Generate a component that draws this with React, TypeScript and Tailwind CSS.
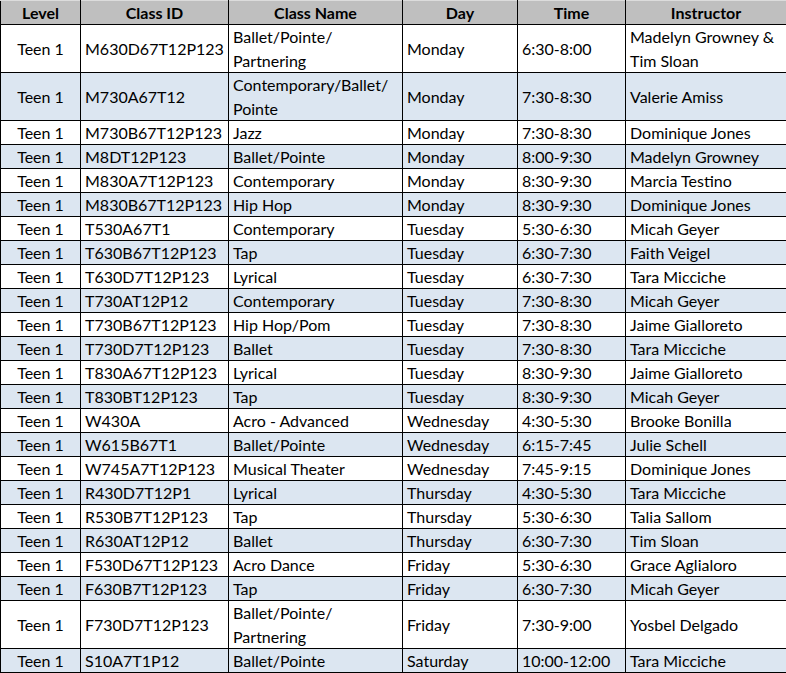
const rows: [string, string, string, string, string, string][] = [
  ['Teen 1', 'M630D67T12P123', 'Ballet/Pointe/ Partnering', 'Monday', '6:30-8:00', 'Madelyn Growney & Tim Sloan'],
  ['Teen 1', 'M730A67T12', 'Contemporary/Ballet/ Pointe', 'Monday', '7:30-8:30', 'Valerie Amiss'],
  ['Teen 1', 'M730B67T12P123', 'Jazz', 'Monday', '7:30-8:30', 'Dominique Jones'],
  ['Teen 1', 'M8DT12P123', 'Ballet/Pointe', 'Monday', '8:00-9:30', 'Madelyn Growney'],
  ['Teen 1', 'M830A7T12P123', 'Contemporary', 'Monday', '8:30-9:30', 'Marcia Testino'],
  ['Teen 1', 'M830B67T12P123', 'Hip Hop', 'Monday', '8:30-9:30', 'Dominique Jones'],
  ['Teen 1', 'T530A67T1', 'Contemporary', 'Tuesday', '5:30-6:30', 'Micah Geyer'],
  ['Teen 1', 'T630B67T12P123', 'Tap', 'Tuesday', '6:30-7:30', 'Faith Veigel'],
  ['Teen 1', 'T630D7T12P123', 'Lyrical', 'Tuesday', '6:30-7:30', 'Tara Micciche'],
  ['Teen 1', 'T730AT12P12', 'Contemporary', 'Tuesday', '7:30-8:30', 'Micah Geyer'],
  ['Teen 1', 'T730B67T12P123', 'Hip Hop/Pom', 'Tuesday', '7:30-8:30', 'Jaime Gialloreto'],
  ['Teen 1', 'T730D7T12P123', 'Ballet', 'Tuesday', '7:30-8:30', 'Tara Micciche'],
  ['Teen 1', 'T830A67T12P123', 'Lyrical', 'Tuesday', '8:30-9:30', 'Jaime Gialloreto'],
  ['Teen 1', 'T830BT12P123', 'Tap', 'Tuesday', '8:30-9:30', 'Micah Geyer'],
  ['Teen 1', 'W430A', 'Acro - Advanced', 'Wednesday', '4:30-5:30', 'Brooke Bonilla'],
  ['Teen 1', 'W615B67T1', 'Ballet/Pointe', 'Wednesday', '6:15-7:45', 'Julie Schell'],
  ['Teen 1', 'W745A7T12P123', 'Musical Theater', 'Wednesday', '7:45-9:15', 'Dominique Jones'],
  ['Teen 1', 'R430D7T12P1', 'Lyrical', 'Thursday', '4:30-5:30', 'Tara Micciche'],
  ['Teen 1', 'R530B7T12P123', 'Tap', 'Thursday', '5:30-6:30', 'Talia Sallom'],
  ['Teen 1', 'R630AT12P12', 'Ballet', 'Thursday', '6:30-7:30', 'Tim Sloan'],
  ['Teen 1', 'F530D67T12P123', 'Acro Dance', 'Friday', '5:30-6:30', 'Grace Aglialoro'],
  ['Teen 1', 'F630B7T12P123', 'Tap', 'Friday', '6:30-7:30', 'Micah Geyer'],
  ['Teen 1', 'F730D7T12P123', 'Ballet/Pointe/ Partnering', 'Friday', '7:30-9:00', 'Yosbel Delgado'],
  ['Teen 1', 'S10A7T1P12', 'Ballet/Pointe', 'Saturday', '10:00-12:00', 'Tara Micciche'],
];

const headers = ['Level', 'Class ID', 'Class Name', 'Day', 'Time', 'Instructor'];

// rows whose text wraps onto two lines in the sheet
const tallRows = [0, 1, 22];

export default function App() {
  return (
    <div className="bg-white font-['Lato',sans-serif] text-[16px] text-black">
      <table className="w-[786px] table-fixed border-collapse">
        <colgroup>
          <col className="w-[80px]" />
          <col className="w-[148px]" />
          <col className="w-[174px]" />
          <col className="w-[115px]" />
          <col className="w-[108px]" />
          <col className="w-[161px]" />
        </colgroup>
        <thead>
          <tr className="bg-[#bfbfbf]">
            {headers.map((h) => (
              <th
                key={h}
                className="border border-black border-t-[#dcdcdc] p-0 text-center font-bold leading-[23px]"
              >
                {h}
              </th>
            ))}
          </tr>
        </thead>
        <tbody>
          {rows.map((r, i) => (
            <tr
              key={r[1]}
              className={
                (i % 2 === 1 ? 'bg-[#dce6f1] ' : 'bg-white ') +
                (tallRows.includes(i) ? 'leading-[23.5px]' : 'leading-[23px]')
              }
            >
              {r.map((c, j) => (
                <td
                  key={j}
                  className={
                    j === 0
                      ? 'border border-black px-1 py-0 text-center'
                      : 'border border-black px-1 py-0 text-left'
                  }
                >
                  {c}
                </td>
              ))}
            </tr>
          ))}
        </tbody>
      </table>
    </div>
  );
}
